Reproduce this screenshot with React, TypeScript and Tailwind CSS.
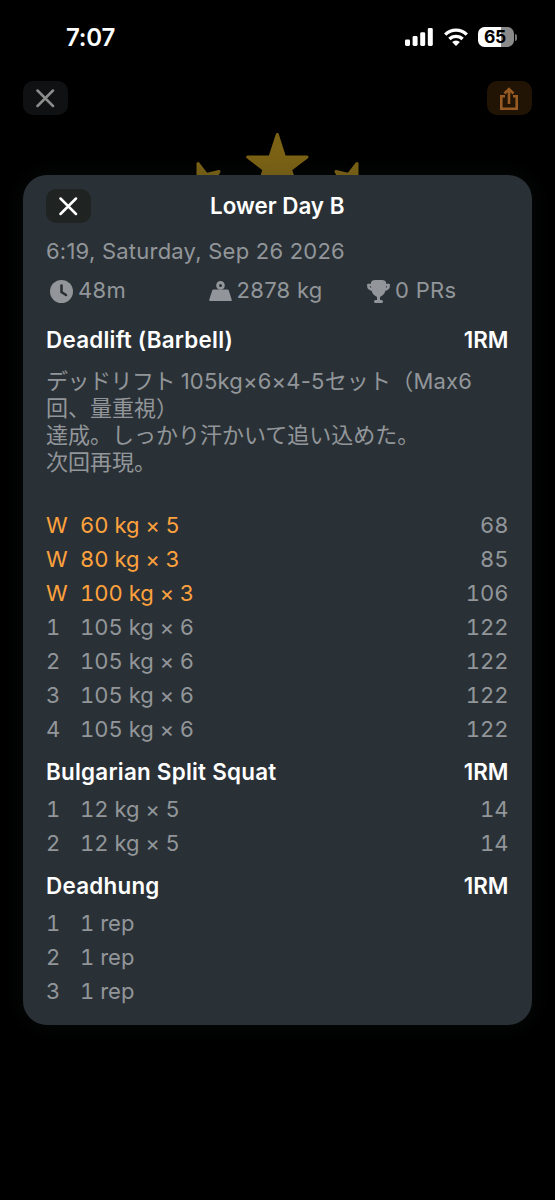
import type { ReactNode } from "react";

type SetRow = { n: string; text: string; max?: string };

const deadlift: SetRow[] = [
  { n: "W", text: "60 kg × 5", max: "68" },
  { n: "W", text: "80 kg × 3", max: "85" },
  { n: "W", text: "100 kg × 3", max: "106" },
  { n: "1", text: "105 kg × 6", max: "122" },
  { n: "2", text: "105 kg × 6", max: "122" },
  { n: "3", text: "105 kg × 6", max: "122" },
  { n: "4", text: "105 kg × 6", max: "122" },
];
const squat: SetRow[] = [
  { n: "1", text: "12 kg × 5", max: "14" },
  { n: "2", text: "12 kg × 5", max: "14" },
];
const deadhung: SetRow[] = [
  { n: "1", text: "1 rep" },
  { n: "2", text: "1 rep" },
  { n: "3", text: "1 rep" },
];

function Cross() {
  return (
    <svg width="20" height="20" viewBox="0 0 20 20" fill="none" stroke="currentColor" strokeWidth="2.5" strokeLinecap="round">
      <path d="M1.5 2.5 17 18M17 2.5 1.5 18" />
    </svg>
  );
}

function StatusBar() {
  return (
    <div className="flex h-[74px] items-center justify-between pl-[66px] pr-[38px] text-white">
      <span className="pt-[2px] text-[24px] font-semibold tracking-[-0.2px]">7:07</span>
      <div className="flex items-center">
        <svg width="28" height="18" viewBox="0 0 28 18" fill="currentColor">
          <rect x="0" y="11.4" width="5" height="6.6" rx="1.4" />
          <rect x="7.6" y="8" width="5" height="10" rx="1.4" />
          <rect x="15.2" y="4.3" width="5" height="13.7" rx="1.4" />
          <rect x="22.8" y="0" width="5" height="18" rx="1.4" />
        </svg>
        <svg className="ml-[11px]" width="24" height="18" viewBox="0 0 24 18" fill="none" stroke="currentColor" strokeWidth="3.3">
          <path d="M1.2 6.6a15.4 15.4 0 0 1 21.6 0" />
          <path d="M5.4 11a9.4 9.4 0 0 1 13.2 0" />
          <path d="M12 18 8.1 14.1a5.5 5.5 0 0 1 7.8 0Z" fill="currentColor" stroke="none" />
        </svg>
        <div className="ml-[10px] flex h-5 w-9 items-center justify-center rounded-[6.5px] bg-[linear-gradient(90deg,#fff_65%,#8a8a8a_65%)] pr-[2px] text-[17.5px] font-bold tracking-[-0.4px] text-black">
          65
        </div>
        <div className="ml-[1px] h-[7px] w-[2px] rounded-r-full bg-[#777]" />
      </div>
    </div>
  );
}

function Stars() {
  return (
    <svg className="absolute left-[190px] top-[130px]" width="175" height="60" viewBox="0 0 175 60" fill="#7b6214" stroke="#7b6214" strokeWidth="3" strokeLinejoin="round">
      <path d="M87.3 4.5 94.5 27 117 27 100.5 39.5 107 60H68L74 39.5 57.7 27 80 27Z" />
      <path d="M8 33.5 16.5 44.5 29 41.5 22 54H8Z" />
      <path d="M167 33.5 158.5 44.5 146 41.5 153 54H167Z" />
    </svg>
  );
}

function Stat({ icon, children }: { icon: ReactNode; children: ReactNode }) {
  return (
    <div className="flex w-[158.5px] shrink-0 items-center">
      {icon}
      <span className="whitespace-pre tracking-[0.3px]">{children}</span>
    </div>
  );
}

function Exercise({ name, rows, note }: { name: ReactNode; rows: SetRow[]; note?: ReactNode }) {
  return (
    <section className="mb-[5.8px]">
      <div className="flex h-10 items-center justify-between pb-[2px] font-semibold text-white">
        <h2 className="text-[22.4px] tracking-[0.25px]">{name}</h2>
        <span className="text-[22.4px]">1RM</span>
      </div>
      {note}
      {rows.map((r, i) => (
        <div key={i} className="flex h-[34.1px] items-center tabular-nums [font-feature-settings:'calt'_0]">
          <span className={r.n === "W" ? "w-[34px] text-[#ffa23e]" : "w-[34px]"}>{r.n}</span>
          <span className={r.n === "W" ? "grow text-[#ffa23e]" : "grow"}>{r.text}</span>
          <span>{r.max}</span>
        </div>
      ))}
    </section>
  );
}

export default function App() {
  return (
    <div className="relative h-[1200px] w-[555px] overflow-hidden bg-black font-['Inter','Noto_Sans_CJK_JP',sans-serif]">
      <StatusBar />
      <div className="flex justify-between px-[23px] pt-[7px]">
        <div className="flex h-[34px] w-[45px] items-center justify-center rounded-[10px] bg-[#101112] text-[#8c8c8c]">
          <Cross />
        </div>
        <div className="flex h-[34px] w-[45px] items-center justify-center rounded-[10px] bg-[#211405] pr-[1px] text-[#965a22]">
          <svg width="18" height="23" viewBox="0 0 18 23" fill="none" stroke="currentColor" strokeWidth="2.6">
            <path d="M5 9.3H1.3V21.7H16.7V9.3H13M9 17V2.5M4.5 6.5 9 2 13.5 6.5" />
          </svg>
        </div>
      </div>
      <Stars />
      <main className="relative ml-[23px] mt-[59.5px] h-[850.5px] w-[508.5px] rounded-[24px] bg-[#2a3136] px-[23px] pt-[14px] text-[22px] leading-[27.2px] text-[#92969a] shadow-[0_0_24px_rgba(42,48,54,0.2)]">
        <header className="relative flex h-[34px] items-center justify-center text-white">
          <div className="absolute left-0 top-0 flex h-[34px] w-[45px] items-center justify-center rounded-[10px] bg-[#1f2322]">
            <Cross />
          </div>
          <h1 className="text-[22.4px] font-semibold">Lower Day B</h1>
        </header>
        <p className="mt-[15px] tracking-[0.23px]">6:19, Saturday, Sep 26 2026</p>
        <div className="mt-3 flex h-[27px] pl-1">
          <Stat icon={
            <svg className="mr-[5px] mt-[2px]" width="23" height="23" viewBox="0 0 23 23">
              <circle cx="11.5" cy="11.5" r="11.5" fill="currentColor" />
              <path d="M11.5 5.5V12L16 15" stroke="#2a3136" strokeWidth="2.6" fill="none" strokeLinecap="round" />
            </svg>
          }>48m</Stat>
          <Stat icon={
            <svg className="mr-[5px] mt-[2px]" width="23" height="20" viewBox="0 0 23 20">
              <circle cx="11.5" cy="4.4" r="2.9" stroke="currentColor" strokeWidth="2.8" fill="none" />
              <path d="M4.6 8.5H18.4Q19.4 8.5 19.8 9.5L22.8 19Q23 20 22 20H1Q0 20 .2 19L3.2 9.5Q3.6 8.5 4.6 8.5Z" fill="currentColor" />
            </svg>
          }>2878 kg</Stat>
          <Stat icon={
            <svg className="mr-[5px] mt-[2px]" width="23" height="23" viewBox="0 0 23 23">
              <path d="M4 2Q5 0 8 0H15Q18 0 19 2V7Q19 14.5 13 17V20H14.5Q16 20 16 21.5T14.5 23H8.5Q7 23 7 21.5T8.5 20H10V17Q4 14.5 4 7Z" fill="currentColor" />
              <path d="M5 5H1.3C1.3 8 3 9.5 6 9.5M18 5H21.7C21.7 8 20 9.5 17 9.5" stroke="currentColor" strokeWidth="2.6" fill="none" strokeLinejoin="round" />
            </svg>
          }>0 PRs</Stat>
        </div>
        <div className="mt-[17px]">
          <Exercise
            name="Deadlift (Barbell)"
            rows={deadlift}
            note={
              <p className="mb-[31.5px] mt-[7px] h-[109px] whitespace-pre [font-feature-settings:'calt'_0]">
                <span className="tracking-[-0.5px]">デッドリフト </span>
                <span className="tracking-[0.2px]">105kg×6×4-5セット（Max6</span>{"\n"}回、量重視）{"\n"}達成。しっかり汗かいて追い込めた。{"\n"}次回再現。
              </p>
            }
          />
          <Exercise name="Bulgarian Split Squat" rows={squat} />
          <Exercise name="Deadhung" rows={deadhung} />
        </div>
      </main>
    </div>
  );
}
